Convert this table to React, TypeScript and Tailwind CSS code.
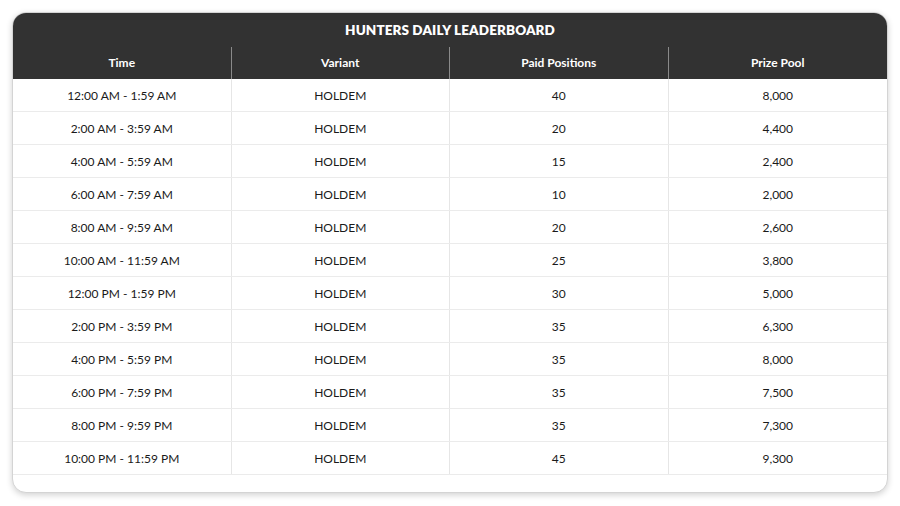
import React from "react";

const rows: [string, string, string, string][] = [
  ["12:00 AM - 1:59 AM", "HOLDEM", "40", "8,000"],
  ["2:00 AM - 3:59 AM", "HOLDEM", "20", "4,400"],
  ["4:00 AM - 5:59 AM", "HOLDEM", "15", "2,400"],
  ["6:00 AM - 7:59 AM", "HOLDEM", "10", "2,000"],
  ["8:00 AM - 9:59 AM", "HOLDEM", "20", "2,600"],
  ["10:00 AM - 11:59 AM", "HOLDEM", "25", "3,800"],
  ["12:00 PM - 1:59 PM", "HOLDEM", "30", "5,000"],
  ["2:00 PM - 3:59 PM", "HOLDEM", "35", "6,300"],
  ["4:00 PM - 5:59 PM", "HOLDEM", "35", "8,000"],
  ["6:00 PM - 7:59 PM", "HOLDEM", "35", "7,500"],
  ["8:00 PM - 9:59 PM", "HOLDEM", "35", "7,300"],
  ["10:00 PM - 11:59 PM", "HOLDEM", "45", "9,300"],
];

const heads = ["Time", "Variant", "Paid Positions", "Prize Pool"];

export default function App() {
  return (
    <div className="w-[900px] h-[506px] bg-white pt-[12px] pl-[12px] font-['Lato',sans-serif]">
      <div className="w-[876px] h-[481px] rounded-[14px] border border-[#d4d4d4] shadow-[0_2px_6px_rgba(0,0,0,0.18)] overflow-hidden bg-white">
        <div className="bg-[#323232] text-white">
          <div className="h-[34px] flex items-center justify-center text-[13.5px] font-extrabold tracking-[0.1px] pt-[1px]">
            HUNTERS DAILY LEADERBOARD
          </div>
          <div className="grid grid-cols-4 h-[32px]">
            {heads.map((h, i) => (
              <div
                key={h}
                className={`flex items-center justify-center text-[12px] font-bold ${i < 3 ? "border-r border-[#8a8a8a]" : ""}`}
              >
                {h}
              </div>
            ))}
          </div>
        </div>
        <div>
          {rows.map((r, ri) => (
            <div key={ri} className="grid grid-cols-4 h-[33px] border-b border-[#ebebeb]">
              {r.map((c, ci) => (
                <div
                  key={ci}
                  className={`flex items-center justify-center pt-[2px] text-[12px] text-[#1a1a1a] ${ci < 3 ? "border-r border-[#e6e6e6]" : ""}`}
                >
                  {c}
                </div>
              ))}
            </div>
          ))}
        </div>
      </div>
    </div>
  );
}
